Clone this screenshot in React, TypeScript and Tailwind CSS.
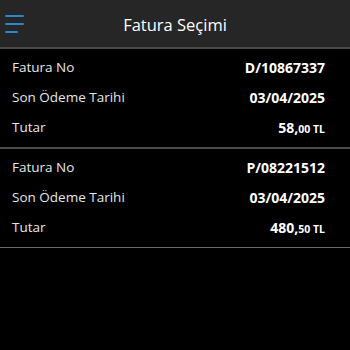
import React from "react";

type Inv = { no: string; date: string; main: string; frac: string };

const invoices: Inv[] = [
  { no: "D/10867337", date: "03/04/2025", main: "58,", frac: "00 TL" },
  { no: "P/08221512", date: "03/04/2025", main: "480,", frac: "50 TL" },
];

function Row({ label, children }: { label: string; children: React.ReactNode }) {
  return (
    <div className="flex h-[30px] items-center justify-between">
      <span className="text-[13.5px] text-[#e6e6e6]">{label}</span>
      <span className="text-[14px] font-bold text-white">{children}</span>
    </div>
  );
}

export default function App() {
  return (
    <div
      className="h-[350px] w-[350px] overflow-hidden bg-black"
      style={{ fontFamily: '"Open Sans", "Noto Sans", sans-serif' }}
    >
      <div className="relative flex h-[47px] items-center justify-center bg-[#262626] pt-[3px]">
        <div className="absolute left-[5px] top-[14.5px] flex flex-col gap-[5.5px]">
          <div className="h-[2.5px] w-[19px] rounded-full bg-[#2b86cc]" />
          <div className="h-[2.5px] w-[19px] rounded-full bg-[#2b86cc]" />
          <div className="h-[2.5px] w-[13px] rounded-full bg-[#2b86cc]" />
        </div>
        <span className="text-[16.5px] text-white">Fatura Seçimi</span>
      </div>
      <div className="h-[2px] bg-[#4a4a4a]" />
      {invoices.map((inv, i) => (
        <div key={i}>
          <div className="pb-[5px] pl-[12px] pr-[25px] pt-[3px]">
            <Row label="Fatura No">{inv.no}</Row>
            <Row label="Son Ödeme Tarihi">{inv.date}</Row>
            <Row label="Tutar">
              {inv.main}
              <span className="text-[10.5px]">{inv.frac}</span>
            </Row>
          </div>
          <div className={i === 0 ? "h-[2px] bg-[#4a4a4a]" : "h-[1px] bg-[#6a6a6a]"} />
        </div>
      ))}
    </div>
  );
}
